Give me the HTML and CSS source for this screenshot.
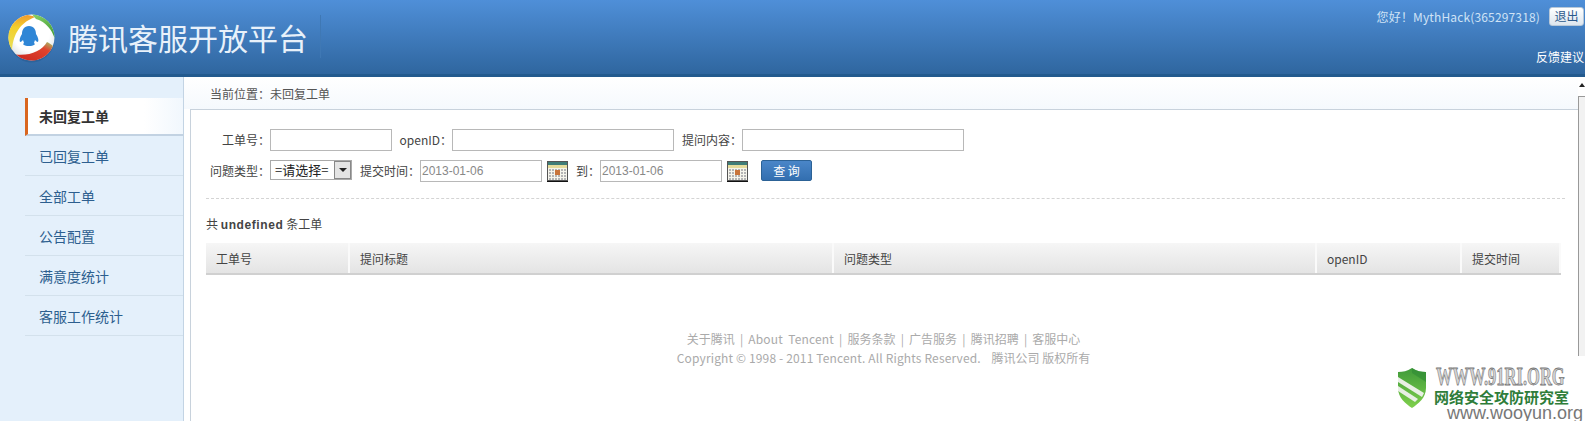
FILE: index.html
```html
<!DOCTYPE html>
<html lang="zh-CN">
<head>
  <meta charset="UTF-8" />
  <title>腾讯客服开放平台</title>
  <link rel="stylesheet" href="styles.css">
</head>
<body>
  <div class="header">
    <div class="brand">
      <svg class="logo" viewBox="0 0 47 50" width="47" height="50">
        <defs>
          <linearGradient id="yel" x1="0" y1="0" x2="0" y2="1">
            <stop offset="0" stop-color="#ef9a2e"/>
            <stop offset="0.35" stop-color="#f3cf2c"/>
            <stop offset="1" stop-color="#e9e05a"/>
          </linearGradient>
          <linearGradient id="grn" x1="0" y1="0" x2="1" y2="1">
            <stop offset="0" stop-color="#8bd06a"/>
            <stop offset="1" stop-color="#3f9e35"/>
          </linearGradient>
          <linearGradient id="rd" x1="1" y1="0" x2="0" y2="1">
            <stop offset="0" stop-color="#9ccf72"/>
            <stop offset="0.3" stop-color="#e0442e"/>
            <stop offset="1" stop-color="#c9261f"/>
          </linearGradient>
          <radialGradient id="ball" cx="0.5" cy="0.4" r="0.65">
            <stop offset="0.6" stop-color="#fff"/>
            <stop offset="1" stop-color="#d8dce0"/>
          </radialGradient>
        </defs>
        <ellipse cx="23.5" cy="26" rx="23" ry="23.5" fill="#1f4f82" opacity="0.35"/>
        <circle cx="23.5" cy="24.5" r="23" fill="url(#ball)"/>
        <path d="M19 2 A23 23 0 0 0 4 37 C5 25 9 11 27 4 C25 3 22 2 19 2 Z" fill="url(#yel)"/>
        <path d="M24 1.5 A23 23 0 0 1 46.5 25 C44 17 38 9 28 6 Z" fill="url(#grn)"/>
        <path d="M45 33 A23 23 0 0 1 8 41.5 C22 43 34 38 39 29 C41 30 43 31 45 33 Z" fill="url(#rd)"/>
        <path d="M21 13 C26 13 28 17 28 21 C30 24 31 27 30 29 C29 29 28 28 27 27 L26 30 C28 31 26 33 21 33 C16 33 14 31 16 30 L15 27 C14 28 13 29 12 29 C11 27 12 24 14 21 C14 17 16 13 21 13 Z" fill="#2f86d6"/>
      </svg>
      <h1 class="title">腾讯客服开放平台</h1>
    </div>
    <div class="user">
      <div class="user-top">
        <span class="hello">您好！MythHack(365297318)</span>
        <button class="logout">退出</button>
      </div>
      <a class="feedback">反馈建议</a>
    </div>
  </div>

  <div class="body">
    <div class="side">
      <a class="menu-item active">未回复工单</a>
      <a class="menu-item">已回复工单</a>
      <a class="menu-item">全部工单</a>
      <a class="menu-item">公告配置</a>
      <a class="menu-item">满意度统计</a>
      <a class="menu-item">客服工作统计</a>
    </div>

    <div class="main">
      <div class="crumb">当前位置：未回复工单</div>
      <div class="panel">
        <div class="form-row first">
          <label class="lbl w-a">工单号：</label>
          <input class="txt w-s" type="text" />
          <label class="lbl w-b">openID：</label>
          <input class="txt w-l" type="text" />
          <label class="lbl w-c">提问内容：</label>
          <input class="txt w-l" type="text" />
        </div>
        <div class="form-row second">
          <label class="lbl w-a">问题类型：</label>
          <div class="sel">=请选择=<span class="sel-btn"><i></i></span></div>
          <label class="lbl w-d">提交时间：</label>
          <input class="txt w-s date" type="text" value="2013-01-06" />
          <svg class="cal" viewBox="0 0 21 21" width="21" height="21">
            <rect width="21" height="21" fill="#555"/>
            <rect y="20" width="21" height="1" fill="#111"/>
            <rect x="1" y="1" width="19" height="18" fill="#f6f5ec"/>
            <rect x="1" y="1" width="19" height="3" fill="#3f7d78"/>
            <rect x="1" y="4" width="19" height="3" fill="#e6dc9c"/>
            <path d="M2 9h17M2 12h17M2 15h17M2 18h17" stroke="#b4b4b4" stroke-width="2" stroke-dasharray="2 1"/>
            <rect x="8" y="9" width="5" height="5" fill="#c8743a"/>
          </svg>
          <label class="lbl w-e">到：</label>
          <input class="txt w-s date" type="text" value="2013-01-06" />
          <svg class="cal" viewBox="0 0 21 21" width="21" height="21">
            <rect width="21" height="21" fill="#555"/>
            <rect y="20" width="21" height="1" fill="#111"/>
            <rect x="1" y="1" width="19" height="18" fill="#f6f5ec"/>
            <rect x="1" y="1" width="19" height="3" fill="#3f7d78"/>
            <rect x="1" y="4" width="19" height="3" fill="#e6dc9c"/>
            <path d="M2 9h17M2 12h17M2 15h17M2 18h17" stroke="#b4b4b4" stroke-width="2" stroke-dasharray="2 1"/>
            <rect x="8" y="9" width="5" height="5" fill="#c8743a"/>
          </svg>
          <button class="query">查 询</button>
        </div>
        <div class="count">共 <b>undefined</b> 条工单</div>
        <div class="thead">
          <div class="th c1">工单号</div>
          <div class="th c2">提问标题</div>
          <div class="th c3">问题类型</div>
          <div class="th c4">openID</div>
          <div class="th c5">提交时间</div>
        </div>
        <div class="footer">
          <div class="foot-links">关于腾讯 | <span class="en">About Tencent</span> | 服务条款 | 广告服务 | 腾讯招聘 | 客服中心</div>
          <div><span class="en">Copyright © 1998 - 2011 Tencent. All Rights Reserved.</span> &nbsp;&nbsp; 腾讯公司 版权所有</div>
        </div>
      </div>
    </div>

    <div class="scroll">
      <div class="scroll-up"></div>
      <div class="scroll-thumb"></div>
    </div>
  </div>

  <div class="mark">
    <svg class="shield" viewBox="0 0 28 40" width="28" height="40">
      <defs>
        <linearGradient id="sh" x1="0" y1="0" x2="0" y2="1">
          <stop offset="0" stop-color="#3f9a3a"/>
          <stop offset="1" stop-color="#7fd04c"/>
        </linearGradient>
      </defs>
      <path d="M14 0 C19 3 23 4 28 4 L28 20 C28 30 20 36 14 40 C8 36 0 30 0 20 L0 4 C5 4 9 3 14 0 Z" fill="url(#sh)"/>
      <path d="M0 9 L26 25 L24 29 L0 14 Z" fill="#e8efe4"/>
      <path d="M0 18 L20 31 L17 34 L0 23 Z" fill="#e8efe4"/>
      <path d="M14 0 C19 3 23 4 28 4 L28 14 L14 5 Z" fill="#2f8a34" opacity="0.6"/>
    </svg>
    <div class="mark-text">
      <div class="mark-a">WWW.91RI.ORG</div>
      <div class="mark-b">网络安全攻防研究室</div>
      <div class="mark-c">www.wooyun.org</div>
    </div>
  </div>
</body>
</html>
```

FILE: styles.css
```css
* { box-sizing: border-box; }
html, body { margin: 0; height: 100%; overflow: hidden; }
body { font-family: "Noto Sans CJK SC", "DejaVu Sans", sans-serif; font-size: 12px; color: #444; background: #fff; position: relative; }

.header { height: 77px; display: flex; justify-content: space-between; background: linear-gradient(#4f8fd8, #2f669f); border-bottom: 3px solid #235a8e; }
.brand { display: flex; align-items: flex-start; padding: 13px 0 0 8px; }
.logo { display: block; flex: none; }
.title { margin: 2px 0 0 13px; height: 43px; padding: 4px 12px 0 0; border-right: 1px solid #3f78b4; font-size: 30px; line-height: 36px; font-weight: 400; color: #e8f1fa; white-space: nowrap; }
.user { display: flex; flex-direction: column; align-items: flex-end; padding-right: 1px; color: #cfe3f6; }
.user-top { display: flex; align-items: center; height: 20px; margin-top: 6px; }
.hello { font-size: 12px; letter-spacing: 0.15px; margin-right: 9px; }
.logout { width: 35px; height: 19px; padding: 0; border: 1px solid #b8c8d8; border-radius: 3px; background: linear-gradient(#fff, #dde6ee); color: #2c5a8c; font: 12px/16px "Noto Sans CJK SC", sans-serif; }
.feedback { margin: 22px 0 0 0; color: #fff; font-size: 12px; }

.body { display: flex; height: 344px; }
.side { width: 184px; flex: none; padding: 21px 0 0 25px; background: #e4f0fb; border-right: 1px solid #c3d4e4; }
.menu-item { display: block; height: 40px; line-height: 41px; padding-left: 14px; font-size: 14px; color: #2d5f8f; border-bottom: 1px solid #d3e1ec; }
.menu-item.active { height: 38px; line-height: 36px; padding-left: 11px; font-weight: 700; color: #333; background: linear-gradient(90deg, #fff 75%, #f1f7fd); border-left: 3px solid #d9661f; border-bottom: 2px solid #c2d2e2; }

.main { flex: 1; min-width: 0; }
.crumb { height: 32px; line-height: 33px; padding-left: 26px; background: linear-gradient(#fff, #f5f9fd); color: #555; }
.panel { height: 312px; margin-left: 6px; padding: 19px 14px 0 15px; background: #fff; border-top: 1px solid #c8d2dc; border-left: 1px solid #c8d2dc; }

.form-row { display: flex; align-items: flex-start; }
.form-row.first { height: 31px; }
.form-row.second { height: 39px; border-bottom: 1px dashed #d4d4d4; width: 1359px; }
.lbl { flex: none; text-align: right; line-height: 21px; color: #444; }
.w-a { width: 64px; }
.w-b { width: 60px; }
.w-c { width: 68px; }
.w-d { width: 68px; }
.w-e { width: 32px; }
.txt { flex: none; height: 22px; padding: 0 1px; border: 1px solid #b8b8b8; background: #fff; }
.w-s { width: 122px; }
.w-l { width: 222px; }
.date { color: #888; font: 12px "Liberation Sans", sans-serif; }
.sel { flex: none; position: relative; width: 82px; height: 20px; padding-left: 4px; border: 1px solid #aaa; font-size: 13px; line-height: 17px; color: #222; white-space: nowrap; }
.sel-btn { position: absolute; right: 0; top: 0; width: 17px; height: 18px; border: 1px solid #888; background: #e4e4e4; }
.sel-btn i { position: absolute; left: 4px; top: 6px; border: 4px solid transparent; border-top-color: #222; border-bottom: 0; }
.cal { flex: none; margin: 1px 0 0 5px; }
.query { flex: none; width: 51px; height: 21px; margin-left: 13px; padding: 0; border: 1px solid #2c6296; border-radius: 2px; background: linear-gradient(#4a86c8, #336fb0); color: #fff; font: 12px/18px "Noto Sans CJK SC", sans-serif; }

.count { margin-top: 16px; height: 28px; line-height: 18px; color: #444; }
.count b { font-family: "Liberation Sans", sans-serif; letter-spacing: 0.6px; color: #444; }

.thead { display: flex; width: 1355px; height: 32px; background: linear-gradient(#f6f6f6, #e4e4e4); border-bottom: 2px solid #d0d0d0; }
.th { flex: none; padding-left: 10px; line-height: 32px; color: #444; border-right: 2px solid #fafafa; }
.c1 { width: 144px; }
.c2 { width: 484px; }
.c3 { width: 483px; }
.c4 { width: 145px; }
.c5 { width: 99px; }

.footer { margin-top: 54px; width: 1355px; text-align: center; color: #aaa; line-height: 19px; }
.foot-links { word-spacing: 2.5px; }
.en { letter-spacing: 0.15px; }

.scroll { width: 7px; flex: none; background: #fff; position: relative; }
.scroll-up { position: absolute; left: 1px; top: 6px; border: 3px solid transparent; border-bottom: 4px solid #222; border-top: 0; }
.scroll-thumb { position: absolute; left: 0; top: 19px; width: 7px; height: 260px; border-left: 1px solid #999; border-top: 1px solid #999; background: #f2f2f2; }

/* watermark sits over the page corner */
.mark { position: absolute; left: 1398px; top: 368px; display: flex; align-items: flex-start; }
.shield { flex: none; }
.mark-text { margin-left: 10px; white-space: nowrap; }
.mark-a { height: 11px; font: 700 16.5px/11px "Liberation Serif", serif; color: #d4d4d4; -webkit-text-stroke: 0.5px #777; transform: scaleY(1.55); transform-origin: 0 0; }
.mark-b { margin: 10px 0 0 -2px; font: 700 15px/15px "Noto Sans CJK SC", sans-serif; color: #2f7d3a; }
.mark-c { margin: 0 0 0 11px; font: 18px/18px "Liberation Sans", sans-serif; color: #777; }
```
